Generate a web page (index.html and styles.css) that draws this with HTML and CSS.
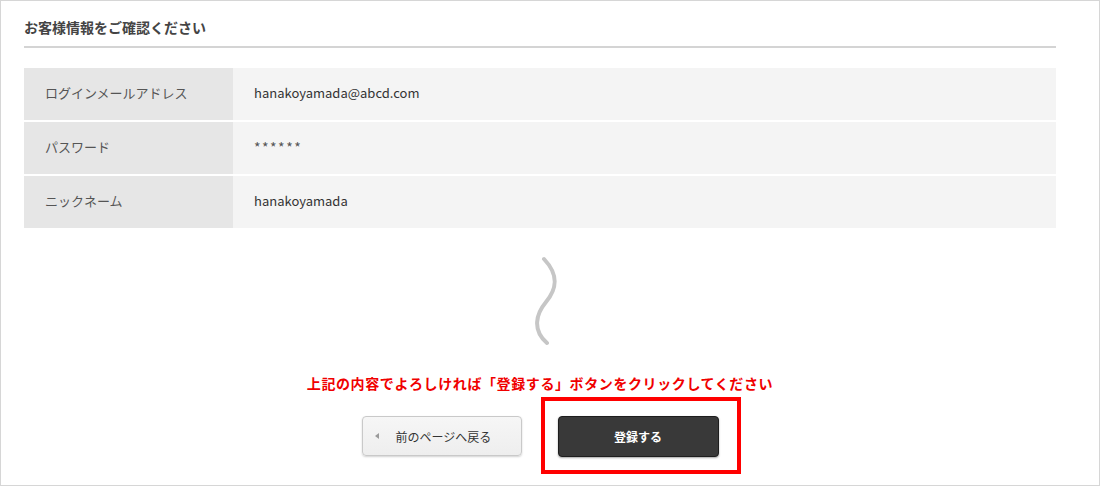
FILE: index.html
```html
<!DOCTYPE html>
<html lang="ja">
  <head>
    <meta charset="UTF-8" />
    <meta name="viewport" content="width=device-width, initial-scale=1.0" />
    <title>お客様情報の確認</title>
    <link rel="stylesheet" href="styles.css">
  </head>
  <body>
    <div class="frame">
      <div class="container">
        <h2 class="title">お客様情報をご確認ください</h2>

        <div class="info-table">
          <div class="label">ログインメールアドレス</div>
          <div class="value">hanakoyamada@abcd.com</div>
          <div class="label">パスワード</div>
          <div class="value masked">******</div>
          <div class="label">ニックネーム</div>
          <div class="value">hanakoyamada</div>
        </div>

        <svg class="squiggle" width="40" height="100" viewBox="520 252 40 100">
          <path d="M544,259 C560,276 556,290 546,302 C536,314 532,330 547,343"
            fill="none" stroke="#c6c6c6" stroke-width="4" stroke-linecap="round" />
        </svg>

        <p class="notice">上記の内容でよろしければ「登録する」ボタンをクリックしてください</p>

        <div class="btn-row">
          <button class="back-btn"><span class="arrow"></span>前のページへ戻る</button>
          <div class="submit-wrap">
            <button class="submit-btn">登録する</button>
            <div class="highlight"></div>
          </div>
        </div>
      </div>
    </div>
  </body>
</html>
```

FILE: styles.css
```css
body {
  margin: 0;
  padding: 0;
  background: #fff;
  font-family: "Noto Sans CJK JP", "Open Sans", sans-serif;
  color: #333;
}
.frame {
  width: 1100px;
  height: 486px;
  box-sizing: border-box;
  border: 1px solid #d6d6d6;
  overflow: hidden;
}
.container {
  width: 1032px;
  margin-left: 23px;
}
.title {
  margin: 0 0 20px;
  padding: 16px 0 9px;
  font-size: 14px;
  line-height: 20px;
  font-weight: bold;
  color: #444;
  border-bottom: 2px solid #d4d4d4;
}
.info-table {
  display: grid;
  grid-template-columns: 209px 1fr;
  row-gap: 2px;
}
.label,
.value {
  height: 52px;
  box-sizing: border-box;
  padding-bottom: 3px;
  display: flex;
  align-items: center;
  font-size: 13px;
}
.label {
  background: #e6e6e6;
  color: #555;
  padding-left: 21px;
}
.value {
  background: #f4f4f4;
  color: #333;
  padding-left: 21px;
}
.masked {
  font-size: 14px;
  letter-spacing: 1.5px;
  color: #555;
}
.squiggle {
  display: block;
  margin: 24px auto 0;
}
.notice {
  margin: 21px 0 0;
  text-align: center;
  font-size: 14px;
  line-height: 20px;
  font-weight: bold;
  letter-spacing: 0.6px;
  color: #f00000;
}
.btn-row {
  display: flex;
  justify-content: center;
  align-items: flex-start;
  gap: 36px;
  margin-top: 23px;
}
button {
  font-family: inherit;
  font-size: 12px;
  cursor: pointer;
  border-radius: 4px;
}
.back-btn {
  width: 160px;
  height: 40px;
  display: flex;
  align-items: center;
  padding: 0 0 0 12px;
  background: linear-gradient(#f6f6f6, #eeeeee);
  border: 1px solid #c9c9c9;
  box-shadow: 0 1px 2px rgba(0, 0, 0, 0.18);
  color: #333;
}
.arrow {
  width: 0;
  height: 0;
  border-top: 3px solid transparent;
  border-bottom: 3px solid transparent;
  border-right: 4px solid #9a9a9a;
  margin-right: 17px;
}
.submit-wrap {
  position: relative;
}
.submit-btn {
  width: 161px;
  height: 41px;
  background: #393939;
  border: 1px solid #1e1e1e;
  box-shadow: 0 1px 2px rgba(0, 0, 0, 0.35);
  color: #fff;
  font-weight: bold;
}
.highlight {
  position: absolute;
  left: -17px;
  top: -19px;
  width: 200px;
  height: 77px;
  box-sizing: border-box;
  border: 4px solid #ff0000;
  pointer-events: none;
}
```
